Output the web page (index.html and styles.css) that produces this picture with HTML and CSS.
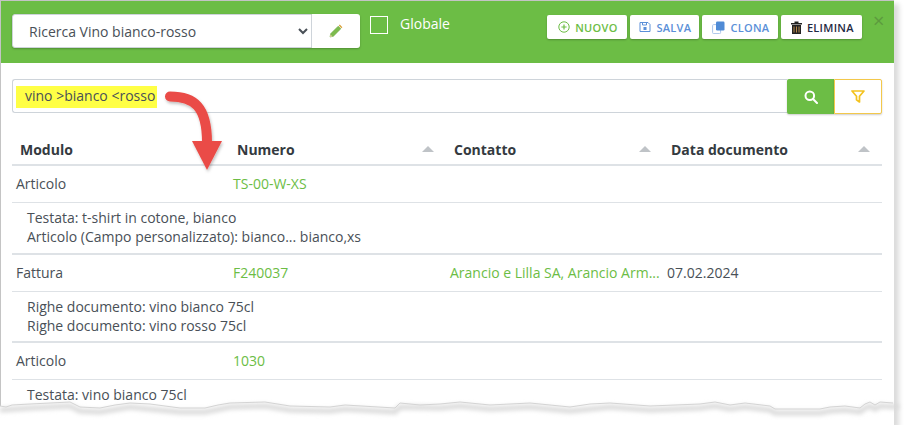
FILE: index.html
```html
<!DOCTYPE html>
<html>
<head>
  <title>Ricerca</title>
  <link rel="stylesheet" href="styles.css">
</head>
<body>
  <div class="finestra">
    <div class="testata">
      <div class="ricerca-salvata">
        <select class="scelta">
          <option>Ricerca Vino bianco-rosso</option>
        </select>
        <button class="matita">
          <svg width="14" height="14" viewBox="0 0 14 14">
            <path d="M1 13l.8-3.4 7.4-7.4 2.6 2.6-7.4 7.4z" fill="#7dbb4d" stroke="#6aa83f" stroke-width=".6"/>
            <path d="M9.8 1.6l1-1 2.6 2.6-1 1z" fill="#d9a13b"/>
            <path d="M1 13l.6-2.4 1.8 1.8z" fill="#e8d3a0"/>
          </svg>
        </button>
      </div>
      <label class="globale"><span class="casella"></span>Globale</label>
      <div class="azioni">
        <button class="azione verde">
          <svg width="12" height="12" viewBox="0 0 12 12" fill="none" stroke="currentColor">
            <circle cx="6" cy="6" r="5.2"/>
            <path d="M6 3.4v5.2M3.4 6h5.2" stroke-width="1.2"/>
          </svg>
          Nuovo
        </button>
        <button class="azione blu">
          <svg width="12" height="12" viewBox="0 0 12 12" fill="none" stroke="currentColor">
            <path d="M1 1.500h8l2 2v7H1z"/>
            <path d="M3.500 1.500v2.500h4v-2.500"/>
            <rect x="5" y="6.500" width="2" height="2" fill="currentColor"/>
          </svg>
          Salva
        </button>
        <button class="azione blu">
          <svg width="13" height="13" viewBox="0 0 13 13">
            <rect x=".6" y="3.600" width="8" height="9" rx="1" fill="#fff" stroke="#a9c4ea"/>
            <rect x="4" y=".5" width="8.500" height="9" rx="1.200" fill="#4f8bd6"/>
          </svg>
          Clona
        </button>
        <button class="azione nera">
          <svg width="11" height="13" viewBox="0 0 11 13">
            <path d="M0 2h11v1.500H0zM3.500.5h4V2h-4z" fill="#222"/>
            <path d="M1 4h9v9H1z" fill="#222"/>
            <path d="M3 5.500v6M5.500 5.500v6M8 5.500v6" stroke="#b5874a" stroke-width="1"/>
          </svg>
          Elimina
        </button>
      </div>
      <span class="chiudi">&times;</span>
    </div>

    <div class="corpo">
      <div class="barra-ricerca">
        <div class="campo"><span class="evidenziato">vino &gt;bianco &lt;rosso</span></div>
        <button class="cerca">
          <svg width="14" height="14" viewBox="0 0 14 14" fill="none" stroke="#fff" stroke-width="2">
            <circle cx="5.800" cy="5.800" r="4.300"/>
            <path d="M9 9l4 4" stroke-linecap="round"/>
          </svg>
        </button>
        <button class="filtro">
          <svg width="14" height="13" viewBox="0 0 14 13" fill="none" stroke="#f3c21f" stroke-width="1.700">
            <path d="M1 1h12L8.500 6.200V12L5.500 9.800V6.200z" stroke-linejoin="round"/>
          </svg>
        </button>
      </div>

      <table class="risultati">
        <thead>
          <tr>
            <th>Modulo</th>
            <th>Numero<span class="ordina"></span></th>
            <th>Contatto<span class="ordina"></span></th>
            <th>Data documento<span class="ordina"></span></th>
          </tr>
        </thead>
        <tbody>
          <tr class="riga">
            <td>Articolo</td>
            <td><a>TS-00-W-XS</a></td>
            <td></td>
            <td></td>
          </tr>
          <tr class="dettaglio">
            <td colspan="4">Testata: t-shirt in cotone, bianco<br>Articolo (Campo personalizzato): bianco... bianco,xs</td>
          </tr>
          <tr class="riga">
            <td>Fattura</td>
            <td><a>F240037</a></td>
            <td><a>Arancio e Lilla SA, Arancio Arm...</a></td>
            <td>07.02.2024</td>
          </tr>
          <tr class="dettaglio">
            <td colspan="4">Righe documento: vino bianco 75cl<br>Righe documento: vino rosso 75cl</td>
          </tr>
          <tr class="riga">
            <td>Articolo</td>
            <td><a>1030</a></td>
            <td></td>
            <td></td>
          </tr>
          <tr class="dettaglio">
            <td colspan="4">Testata: vino bianco 75cl</td>
          </tr>
        </tbody>
      </table>
    </div>
  </div>

  <!-- freccia rossa sopra la tabella -->
  <svg class="freccia" width="70" height="90" viewBox="160 85 70 90">
    <defs>
      <filter id="ombra" x="-20%" y="-20%" width="140%" height="140%">
        <feDropShadow dx="1" dy="2" stdDeviation="1.500" flood-color="#000" flood-opacity=".25"/>
      </filter>
    </defs>
    <g filter="url(#ombra)">
      <path d="M170 96.500c24 0 37 10 37 46" fill="none" stroke="#ea4c46" stroke-width="10" stroke-linecap="round"/>
      <path d="M192 141h30l-15 29z" fill="#ea4c46"/>
    </g>
  </svg>

  <!-- bordo strappato in basso -->
  <svg class="strappo" width="909" height="35" viewBox="0 390 909 35">
    <defs>
      <filter id="sfuma" x="-2%" y="-100%" width="104%" height="300%">
        <feGaussianBlur stdDeviation="2.200"/>
      </filter>
    </defs>
    <path d="M0 406L6 407 12 405 30 404 50 403 70 402 76 405 80 407 100 408 115 405 130 403 150 404 180 408 205 408 218 405 230 403 265 402 290 406 330 407 345 405 395 408 400 403 420 405 440 404 460 402 490 405 510 404 530 403 570 407 590 404 610 403 650 406 700 404 715 402 730 405 745 403 770 406 775 409 820 409 830 407 845 406 860 408 865 404 870 402 875 405 880 402 893 403V425H0z" fill="#fff"/>
    <path d="M0 410L30 408 70 406 80 411 100 412 130 407 180 412 205 412 230 407 265 406 290 410 330 411 345 409 395 412 400 407 440 408 460 406 490 409 530 407 570 411 610 407 650 410 700 408 715 406 730 409 745 407 770 410 775 413 820 413 830 411 845 410 860 412 865 408 870 406 875 409 880 406 899 407" fill="none" stroke="#dadada" stroke-width="5" filter="url(#sfuma)"/>
    <path d="M0 406L6 407 12 405 30 404 50 403 70 402 76 405 80 407 100 408 115 405 130 403 150 404 180 408 205 408 218 405 230 403 265 402 290 406 330 407 345 405 395 408 400 403 420 405 440 404 460 402 490 405 510 404 530 403 570 407 590 404 610 403 650 406 700 404 715 402 730 405 745 403 770 406 775 409 820 409 830 407 845 406 860 408 865 404 870 402 875 405 880 402 893 403" fill="none" stroke="#d4d4d4"/>
  </svg>
</body>
</html>
```

FILE: styles.css
```css
* {
  box-sizing: border-box;
}

html, body {
  height: 425px;
  overflow: hidden;
}

body {
  margin: 0;
  position: relative;
  background-color: #fff;
  color: #495057;
  font-family: "Open Sans", sans-serif;
  font-size: 14px;
}

button {
  font-family: inherit;
  cursor: pointer;
}

.finestra {
  width: 894px;
  height: 425px;
  overflow: hidden;
  background-color: #fff;
  border-top: 1px solid #c4c4c4;
  border-left: 1px solid #c4c4c4;
  box-shadow: 5px 4px 5px rgba(0, 0, 0, 0.14);
}

/* Testata verde */
.testata {
  display: flex;
  align-items: flex-start;
  height: 62px;
  padding: 13px 0 0 11px;
  background-color: #6cbd45;
}

.ricerca-salvata {
  display: flex;
  width: 348px;
  height: 34px;
  box-shadow: 0 1px 2px rgba(0, 0, 0, 0.25);
  border-radius: 3px;
}

.scelta {
  width: 300px;
  height: 34px;
  padding-left: 12px;
  background-color: #fff;
  color: #495057;
  border: 1px solid #ced4da;
  border-radius: 3px 0 0 3px;
  font-family: inherit;
  font-size: 14px;
}

.matita {
  display: flex;
  align-items: center;
  justify-content: center;
  width: 48px;
  height: 34px;
  background-color: #fff;
  border: none;
  border-radius: 0 3px 3px 0;
}

.globale {
  display: flex;
  align-items: flex-start;
  margin-left: 10px;
  margin-top: 2px;
  color: #fff;
  font-size: 14px;
  line-height: 16px;
}

.casella {
  width: 18px;
  height: 18px;
  margin-right: 12px;
  border: 1px solid #fff;
}

.azioni {
  display: flex;
  gap: 3px;
  margin-left: 97px;
  margin-top: 1px;
}

.azione {
  display: flex;
  align-items: center;
  justify-content: center;
  gap: 5px;
  height: 24px;
  padding: 0 4px 0 6px;
  background-color: #fff;
  border: none;
  border-radius: 2px;
  box-shadow: 0 1px 2px rgba(0, 0, 0, 0.25);
  font-size: 11px;
  font-weight: 600;
  letter-spacing: 0.3px;
  text-transform: uppercase;
}

.verde {
  width: 80px;
  color: #6cbd45;
}

.blu {
  width: 69px;
  color: #5a8fd8;
}

.blu + .blu {
  width: 76px;
}

.nera {
  width: 81px;
  color: #1f2a44;
}

.chiudi {
  margin-left: 11px;
  margin-top: -3px;
  color: #5c9a3e;
  font-size: 20px;
  line-height: 20px;
}

/* Corpo */
.corpo {
  padding: 16px 12px 0 11px;
}

.barra-ricerca {
  display: flex;
  height: 35px;
}

.campo {
  flex: 1;
  height: 34px;
  padding: 6px 0 0 3px;
  border: 1px solid #ced4da;
  border-right: none;
  border-radius: 3px 0 0 3px;
}

.evidenziato {
  display: block;
  width: 141px;
  height: 22px;
  padding-left: 9px;
  background-color: #ffff45;
  line-height: 20px;
}

.cerca, .filtro {
  display: flex;
  align-items: center;
  justify-content: center;
  height: 35px;
  box-shadow: 0 1px 2px rgba(0, 0, 0, 0.2);
}

.cerca {
  width: 47px;
  background-color: #6cbd45;
  border: none;
  border-radius: 2px 0 0 2px;
}

.filtro {
  width: 48px;
  background-color: #fff;
  border: 1px solid #f3c84b;
  border-radius: 0 2px 2px 0;
}

/* Tabella risultati */
.risultati {
  width: 870px;
  margin-top: 16px;
  border-collapse: collapse;
  table-layout: fixed;
}

.risultati th {
  position: relative;
  width: 217px;
  height: 35px;
  padding: 5px 0 0 8px;
  border-bottom: 2px solid #dee2e6;
  color: #343a40;
  font-size: 14px;
  font-weight: 700;
  text-align: left;
}

.risultati th:last-child {
  width: 219px;
}

.ordina {
  position: absolute;
  right: 12px;
  top: 16px;
  border-left: 6px solid transparent;
  border-right: 6px solid transparent;
  border-bottom: 6px solid #bfc3c7;
}

.riga td {
  height: 37px;
  padding: 0 4px;
  border-bottom: 1px solid #dee2e6;
  white-space: nowrap;
}

.riga a {
  color: #6cbd45;
}

.dettaglio td {
  height: 51px;
  padding: 5px 0 0 15px;
  border-bottom: 2px solid #dee2e6;
  line-height: 19.5px;
  vertical-align: top;
}

.dettaglio:nth-child(2) td {
  height: 52px;
}

.freccia {
  position: absolute;
  left: 160px;
  top: 85px;
}

.strappo {
  position: absolute;
  left: 0;
  bottom: 0;
}
```
